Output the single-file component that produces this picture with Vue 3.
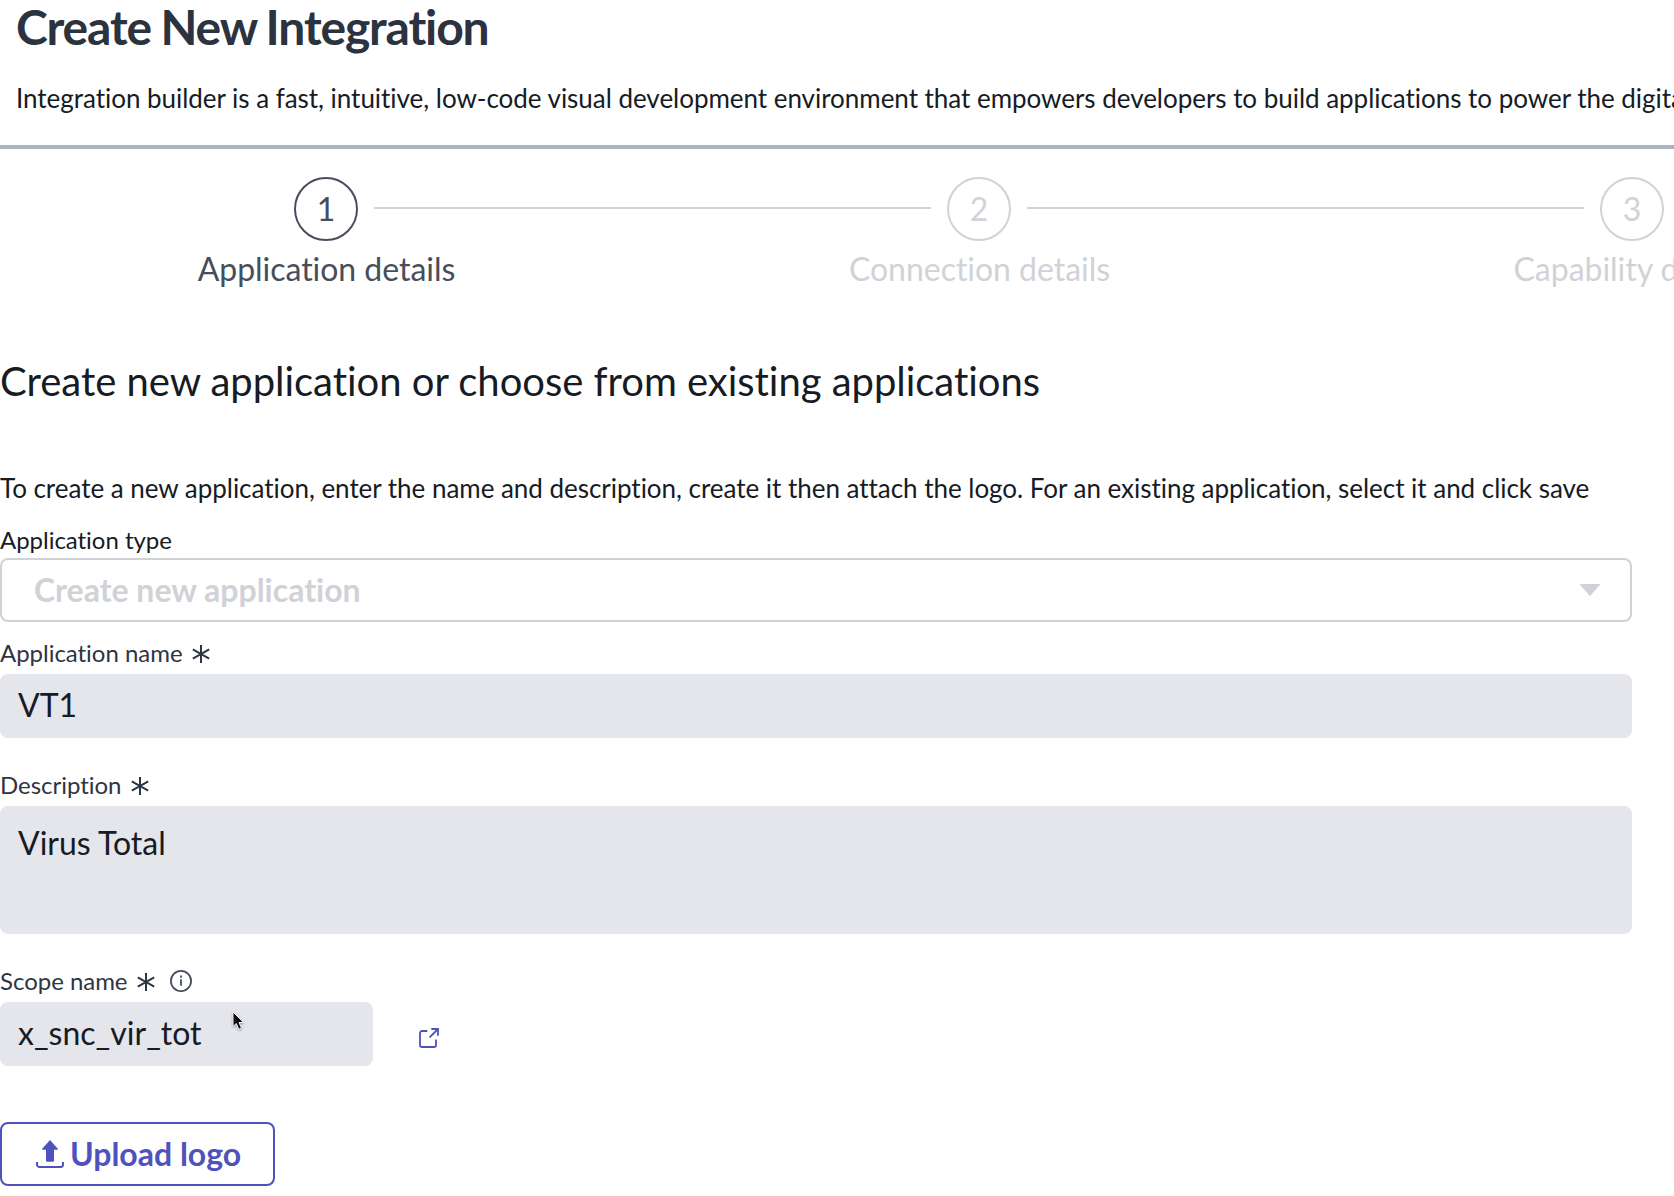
<script setup>
import { ref } from "vue";

const steps = ref([
  { id: 1, label: "Application details", active: true },
  { id: 2, label: "Connection details", active: false },
  { id: 3, label: "Capability details", active: false },
]);

const applicationName = ref("VT1");
const description = ref("Virus Total");
const scopeName = ref("x_snc_vir_tot");
</script>

<template>
  <div class="page">
    <!-- ── Header ─────────────────────────────────────── -->
    <header class="header">
      <h1 class="title">Create New Integration</h1>
      <p class="subtitle">
        Integration builder is a fast, intuitive, low-code visual development
        environment that empowers developers to build applications to power the
        digital
      </p>
    </header>

    <!-- ── Stepper ────────────────────────────────────── -->
    <ol class="stepper">
      <li
        v-for="step in steps"
        :key="step.id"
        class="step"
        :class="{ 'step--active': step.active }"
      >
        <div class="step-track">
          <span class="step-line" :class="{ 'step-line--off': step.id === 1 }" />
          <span class="step-circle">{{ step.id }}</span>
          <span class="step-line" />
        </div>
        <span class="step-label">{{ step.label }}</span>
      </li>
    </ol>

    <!-- ── Form ───────────────────────────────────────── -->
    <main class="form">
      <h2 class="heading">
        Create new application or choose from existing applications
      </h2>
      <p class="hint">
        To create a new application, enter the name and description, create it
        then attach the logo. For an existing application, select it and click
        save
      </p>

      <div class="field field--select">
        <span class="label label--dark">Application type</span>
        <button type="button" class="select" disabled>
          <span class="select-value">Create new application</span>
          <svg class="caret" viewBox="0 0 20 12" fill="currentColor">
            <path d="M.6 0h18.8c.6 0 .8.7.4 1.1L10.6 11.6a.8.8 0 0 1-1.2 0L.2 1.1C-.2.7 0 0 .6 0Z" />
          </svg>
        </button>
      </div>

      <div class="field">
        <label class="label" for="app-name">
          Application name
          <svg class="required" viewBox="0 0 18 18">
            <path d="M9 0v18M.8 4.3l16.4 9.4M17.2 4.3.8 13.7" />
          </svg>
        </label>
        <input id="app-name" v-model="applicationName" class="input" readonly />
      </div>

      <div class="field">
        <label class="label" for="description">
          Description
          <svg class="required" viewBox="0 0 18 18">
            <path d="M9 0v18M.8 4.3l16.4 9.4M17.2 4.3.8 13.7" />
          </svg>
        </label>
        <textarea
          id="description"
          v-model="description"
          class="input input--area"
          readonly
        />
      </div>

      <div class="field">
        <label class="label" for="scope">
          Scope name
          <svg class="required" viewBox="0 0 18 18">
            <path d="M9 0v18M.8 4.3l16.4 9.4M17.2 4.3.8 13.7" />
          </svg>
          <svg class="info" viewBox="0 0 22 22">
            <circle cx="11" cy="11" r="10.1" />
            <path d="M11 9.3v6.4M11 5.6v2.1" />
          </svg>
        </label>
        <div class="scope-row">
          <div class="scope-input">
            <input id="scope" v-model="scopeName" class="input" readonly />
            <svg class="cursor" viewBox="0 0 16 22">
              <path d="M2 1v14.5l3.3-3 2.5 5.8 2.7-1.2-2.5-5.6h4.6L2 1Z" />
            </svg>
          </div>
          <svg class="open-link" viewBox="0 0 20 20">
            <path d="M8.3 3H3a2 2 0 0 0-2 2v12a2 2 0 0 0 2 2h12a2 2 0 0 0 2-2v-5.6" />
            <path d="M12.3 1H19v6.8M19 1l-8.4 8.4" />
          </svg>
        </div>
      </div>

      <button type="button" class="upload">
        <svg class="upload-icon" viewBox="0 0 28 28">
          <path
            class="upload-arrow"
            d="M14 0l7.6 8.4c.5.6.3 1.4-.6 1.4h-3v11a1 1 0 0 1-1 1h-6a1 1 0 0 1-1-1v-11H7c-.9 0-1.1-.8-.6-1.4L14 0Z"
          />
          <path
            class="upload-tray"
            d="M1 22v2.5a2.5 2.5 0 0 0 2.5 2.5h21a2.5 2.5 0 0 0 2.5-2.5V22"
          />
        </svg>
        <span>Upload logo</span>
      </button>
    </main>
  </div>
</template>

<style>
body {
  background: #fff;
  overflow: hidden;
}
</style>

<style scoped>
.page {
  width: 100%;
  height: 1196px;
  overflow: hidden;
  font-family: Lato, "Liberation Sans", sans-serif;
  font-variant-ligatures: none;
  letter-spacing: -0.03px;
  color: #161b24;
}

.page * {
  box-sizing: border-box;
}

/* ── Header ─────────────────────────────────────────── */
.header {
  height: 149px;
  padding: 2px 0 0 16px;
  border-bottom: 4px solid #adb3bf;
  overflow: hidden;
}

.title {
  margin: 0;
  font-size: 48px;
  line-height: 50px;
  font-weight: 700;
  letter-spacing: -1.15px;
  word-spacing: -1px;
  color: #2b3240;
}

.subtitle {
  margin: 30px 0 0;
  font-size: 26px;
  line-height: 32px;
  white-space: nowrap;
}

/* ── Stepper ────────────────────────────────────────── */
.stepper {
  display: flex;
  width: 1959px;
  margin: 0 0 0 -1px;
  padding: 28px 0 0;
  list-style: none;
}

.step {
  display: flex;
  flex-direction: column;
  align-items: center;
  gap: 8px;
  width: 653px;
  color: #d1d2d7;
}

.step--active {
  color: #464e5c;
}

.step-track {
  display: flex;
  align-items: center;
  gap: 16px;
  width: 100%;
}

.step-line {
  flex: 1;
  height: 2px;
  margin-bottom: 2px;
  background: #d2d4dc;
}

.step-line--off {
  visibility: hidden;
}

.step-circle {
  width: 64px;
  height: 64px;
  padding-left: 1px;
  border: 2px solid currentColor;
  border-radius: 50%;
  font-size: 32px;
  line-height: 59px;
  text-align: center;
}

.step-label {
  padding-left: 2px;
  font-size: 32px;
  line-height: 40px;
  white-space: nowrap;
}

/* ── Form ───────────────────────────────────────────── */
.form {
  width: 1632px;
  padding-top: 68px;
}

.heading {
  margin: 0;
  font-size: 40px;
  line-height: 48px;
  font-weight: 400;
}

.hint {
  margin: 67px 0 0;
  font-size: 26px;
  line-height: 32px;
  white-space: nowrap;
}

.field {
  display: flex;
  flex-direction: column;
  gap: 7px;
  margin-bottom: 33px;
}

.field--select {
  gap: 4px;
  margin: 22px 0 17px;
}

.label {
  display: flex;
  align-items: center;
  font-size: 24px;
  line-height: 28px;
  color: #2e3543;
}

.label--dark {
  color: #161b24;
}

.required {
  width: 18px;
  height: 18px;
  margin: 2px 0 0 9.5px;
  fill: none;
  stroke: #2e3543;
  stroke-width: 2;
}

.info {
  width: 22px;
  height: 22px;
  margin-left: 14.5px;
  fill: none;
  stroke: #464e5c;
  stroke-width: 1.8;
}

.select {
  display: flex;
  align-items: center;
  justify-content: space-between;
  height: 64px;
  padding: 0 30px 0 32px;
  border: 2px solid #d1d2d7;
  border-radius: 8px;
  background: #fff;
  font: 700 32px/60px Lato, "Liberation Sans", sans-serif;
  font-variant-ligatures: none;
  color: #d1d2d7;
}

.caret {
  width: 20px;
  height: 12px;
}

.input {
  display: block;
  width: 100%;
  height: 64px;
  margin: 0;
  padding: 0 18px 3px;
  border: 0;
  border-radius: 8px;
  outline: none;
  background: #e5e6eb;
  font: 400 32px/40px Lato, "Liberation Sans", sans-serif;
  color: #161b24;
}

.input--area {
  height: 128px;
  padding: 17px 18px;
  resize: none;
}

.scope-row {
  display: flex;
  align-items: center;
}

.scope-input {
  position: relative;
  width: 373px;
}

/* Mouse pointer resting over the scope field */
.cursor {
  position: absolute;
  top: 9px;
  left: 231px;
  width: 16px;
  height: 22px;
  fill: #0b0b0b;
  stroke: #f7f7f7;
  stroke-width: 1;
  filter: drop-shadow(0 1px 1px rgba(0, 0, 0, 0.35));
}

.open-link {
  width: 20px;
  height: 20px;
  margin: 8px 0 0 46px;
  fill: none;
  stroke: #4f52bd;
  stroke-width: 1.8;
}

.upload {
  display: flex;
  align-items: center;
  gap: 6px;
  width: 275px;
  height: 64px;
  margin-top: 56px;
  padding: 0 0 0 34px;
  border: 2px solid #4f52bd;
  border-radius: 8px;
  background: #fff;
  font: 700 32px/60px Lato, "Liberation Sans", sans-serif;
  color: #4f52bd;
  white-space: nowrap;
}

.upload-icon {
  width: 28px;
  height: 28px;
}

.upload-arrow {
  fill: #4f52bd;
}

.upload-tray {
  fill: none;
  stroke: #4f52bd;
  stroke-width: 2;
}
</style>
